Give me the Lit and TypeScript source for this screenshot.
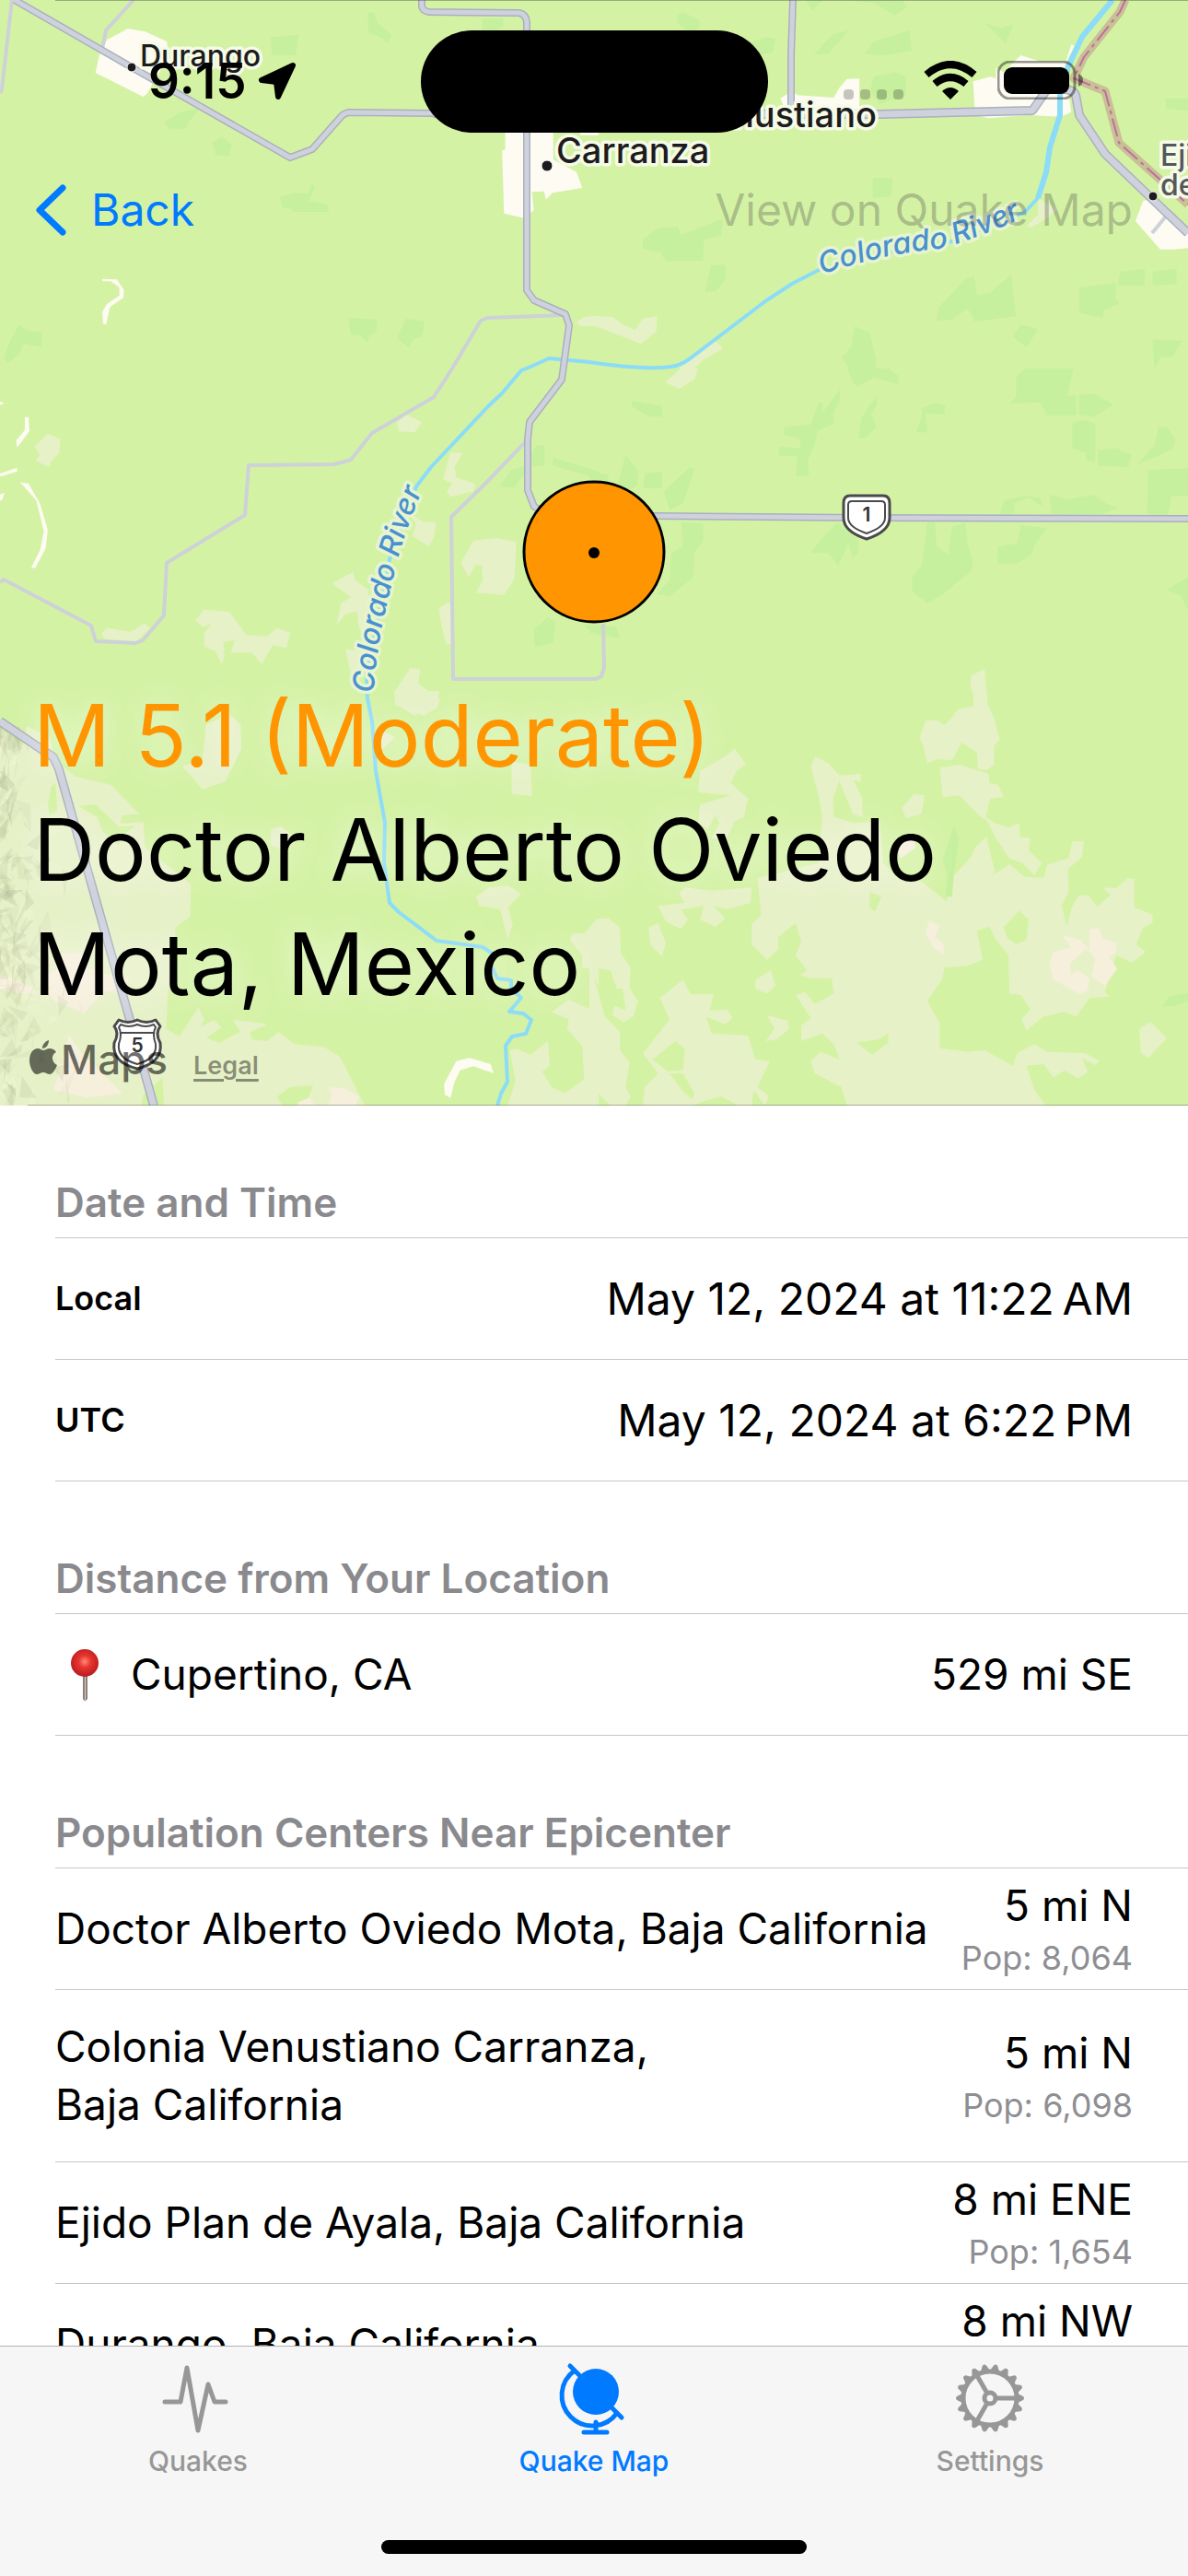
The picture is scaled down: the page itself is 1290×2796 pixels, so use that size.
import { LitElement, html, css, svg } from "lit";
import { customElement, property } from "lit/decorators.js";

interface Place {
  town: string;
  region: string;
  distance: string;
  population: string;
}

const DATES = [
  { label: "Local", value: "May 12, 2024 at 11:22\u202FAM" },
  { label: "UTC", value: "May 12, 2024 at 6:22\u202FPM" },
];

const PLACES: Place[] = [
  { town: "Doctor Alberto Oviedo Mota", region: "Baja California", distance: "5 mi N", population: "8,064" },
  { town: "Colonia Venustiano Carranza", region: "Baja California", distance: "5 mi N", population: "6,098" },
  { town: "Ejido Plan de Ayala", region: "Baja California", distance: "8 mi ENE", population: "1,654" },
  { town: "Durango", region: "Baja California", distance: "8 mi NW", population: "1,192" },
];

/* Each tile of map polygons is stored in its own survey units. */
const tile = (x: number, y: number) => `translate(${x} ${y}) scale(0.4146 0.3333)`;

/* Faceted hill shading along the western slope. */
const relief = (() => {
  let seed = 11;
  const next = () => {
    seed = (seed * 1103515245 + 12345) % 2147483648;
    return seed / 2147483648;
  };
  const tones = ["#8f9a78", "#b9c296", "#ffffe0", "#a5ad88"];
  return Array.from({ length: 230 }, (_, i) => {
    const y = 790 + next() * 410;
    const reach = y < 880 ? 24 : 46 + (y > 1060 ? 34 : 0);
    const x = next() * next() * reach * 1.5;
    const p = [0, 1, 2].map(
      () => `${Math.round(x + (next() - 0.5) * 26)},${Math.round(y + (next() - 0.5) * 40)}`
    );
    return { points: p.join(" "), fill: tones[i % 4], opacity: 0.08 + next() * 0.14 };
  });
})();

@customElement("quake-map")
export class QuakeMap extends LitElement {
  static styles = css`
    :host { display: block; }
    .canvas { display: block; width: 100%; height: 100%; font-family: Inter, "Liberation Sans", sans-serif; }
    .ground { fill: #d4f2a4; }
    .crop { fill: #c6f09e; }
    .scrub { fill: #e7f1c8; }
    .sand { fill: #f6efdc; }
    .town { fill: #fdfbf2; }
    .line { fill: none; stroke-linejoin: round; }
    .casing { stroke: #a9b0bf; stroke-width: 8; }
    .road { stroke: #cfd2dd; stroke-width: 5; }
    .casing-wide { stroke: #a9b0bf; stroke-width: 10; }
    .road-wide { stroke: #cfd2dd; stroke-width: 7; }
    .lane { stroke: #cdd1d8; stroke-width: 4; }
    .river { stroke: #8bdcf8; stroke-width: 4; }
    .river-wide { stroke: #8bdcf8; stroke-width: 6; }
    .band { stroke: #b97c84; stroke-opacity: 0.42; stroke-width: 9; }
    .border { stroke: #bf6ea0; stroke-width: 2; stroke-dasharray: 20 5 4 5; }
    .label { fill: #1c1c1e; stroke: #f6fbe8; stroke-width: 7; stroke-linejoin: round; paint-order: stroke; font-weight: 500; }
    .small { font-size: 32px; }
    .large { font-size: 38px; }
    .muted { fill: #55575a; }
    .water { font-size: 32px; font-style: italic; fill: #4a90d0; stroke: #e6f5cf; }
    .dot { fill: #1c1c1e; stroke: #fff; stroke-width: 1; }
    .sign { fill: #fff; stroke: #4a4a4a; stroke-width: 3; stroke-linejoin: round; }
    .sign-inner { fill: none; stroke: #4a4a4a; stroke-width: 2; stroke-linejoin: round; }
    .sign-text { fill: #333; font-size: 21px; font-weight: 600; text-anchor: middle; }
    .epicenter { fill: #ff9500; stroke: #000; stroke-width: 3; }
    .edge { stroke: #000; stroke-opacity: 0.28; stroke-width: 1; }
  `;

  render() {
    const mainRoads = [
      "M458 0V7Q459 12 466 13L564 14Q572 16 572 25V315L580 326L614 341L618 353L610 412L575 458L573 477V532L580 550L600 560L712 560L941 562L1290 563",
      "M861 0L859 60V120",
      "M16 0L143 73L315 171L339 162L370 127Q373 123 379 122L470 123",
    ];
    const wideRoads = [
      "M470 123L955 124L1121 120L1137 97H1158Q1167 99 1168 103L1172 125L1200 167L1290 253",
      "M0 783L58 822L64 835L141 1107L167 1200",
    ];
    const lanes = [
      "M13 0L2 97L0 101", "M145 0L115 33L111 53",
      "M614 342L529 345L522 348L491 400L471 431L404 470L381 499L363 504L270 505L266 559L181 611L178 668L155 695L147 698L104 696L99 679L4 629L0 632",
      "M573 477L524 528L490 561L492 737H647L653 734L656 725L655 677",
      "M1251 253L1270 230",
    ];
    return html`
      <svg class="canvas" viewBox="0 0 1290 1200" preserveAspectRatio="xMidYMax slice" role="img" aria-label="Map of the epicenter">
        <rect class="ground" width="1290" height="1200" />
        <g transform=${tile(0, 0)}>
          <path class="crop" d="M709 121L782 113L775 180L712 178ZM963 40L980 42L990 75L1027 115L1015 140L992 118L965 108ZM1263 60H1318V85L1300 98H1262ZM430 400L470 365L528 350L495 395L485 420L445 422ZM556 465L580 445L607 470L600 508L565 505ZM732 640L775 628L805 630L818 600L825 610L808 655L858 665L861 690H765V680L740 678ZM913 1035L987 1040V1080L968 1092L962 1115L945 1092L918 1088ZM1062 1038L1112 1045L1105 1098L1082 1105L1070 1133L1040 1100ZM50 1057L68 1075L110 1082V1130L62 1120L52 1150L20 1185L10 1165L30 1100Z" />
          <path class="town" d="M335 93L380 103L437 135L440 165L420 230L385 305L375 315L250 237L260 180L280 130ZM1323 425V487L1315 490L1320 695L1372 710L1398 685L1393 625L1425 623L1430 650L1447 628L1525 612L1510 560L1480 540L1449 520V425ZM1520 425H1568V440H1520ZM268 908L306 910L325 945L323 970L288 1000L278 1057L270 1055L268 1015L280 990L313 962L312 935L290 916H268Z" />
          <path class="scrub" d="M1508 1050L1530 1032L1568 1030V1062L1520 1062Z" />
        </g>
        <g transform=${tile(640, 0)}>
          <path class="crop" d="M230 50L245 40L288 65V92L262 105L232 78ZM400 150L460 120L487 125L480 170L410 190ZM565 0H610L585 35ZM670 0H820L832 25L800 50L745 10ZM640 110L680 100L625 175L588 178L612 145ZM720 175L745 135L838 98L845 165L770 180ZM1038 77L1080 90L1110 78L1090 143ZM745 250L800 235L830 250V310L760 340L735 295ZM1508 320H1568V360L1510 355ZM742 580H795L790 640L742 645ZM140 780L180 742L232 738L240 765L290 740L350 712L345 768L300 780L298 850H200L185 822L140 810ZM318 865L355 862L357 908L330 950L302 952ZM988 905L1008 900L1015 960L1050 955L1075 925L1105 895L1117 1030L1010 1048L990 1005L950 1040L908 1045L915 1000ZM1282 935L1380 920L1378 970L1388 990L1348 1010L1345 1035L1283 1020ZM1390 885L1455 875V930H1384ZM1475 885L1538 875V925L1475 930ZM1130 1057L1175 1072L1145 1132L1108 1095ZM695 1062L735 1085L750 1165V1200H680L660 1165L685 1130ZM1475 1105L1552 1110L1530 1160L1495 1165L1480 1200Z" />
          <path class="town" d="M500 320L530 298L545 310L640 318L655 285L675 257L707 256V355L520 375ZM1005 265L1050 250L1065 255V220L1085 235L1130 180L1180 200H1248L1262 145L1270 150L1245 215L1262 365L1235 380L1150 375L1045 385L1010 375ZM1430 720L1450 655L1475 645L1568 760V808L1530 812L1495 812Z" />
          <path class="scrub" d="M0 1030L60 1032L90 1058L120 1075L140 1038L178 1030L175 1080L135 1120L75 1090L0 1055ZM1175 645L1225 680L1200 710L1155 742L1145 735L1175 700ZM325 1105L350 1135L300 1170L275 1200H235L290 1150Z" />
        </g>
        <g transform=${tile(0, 400)}>
          <path class="crop" d="M1405 250L1427 250V315L1390 320L1345 388L1308 385L1338 330L1370 320ZM1450 290L1568 335V360L1445 315ZM1435 810L1455 825L1448 895L1400 905L1398 850ZM1525 835L1568 840V870Z" />
          <path class="scrub" d="M1040 175L1065 150L1105 175L1085 208L1045 205ZM125 212L158 230L155 275L135 300L128 320L93 300L105 280L90 255ZM1180 272L1212 275L1190 320L1195 355L1245 375L1240 400L1180 418L1170 400L1185 375L1160 360ZM1065 465L1110 500L1142 500L1138 540L1125 580L1080 545L1090 505ZM1240 560L1300 552L1352 565L1347 685L1320 737L1247 730L1265 690L1262 640L1245 640L1228 680L1207 632ZM870 700L925 662L930 690L965 720L962 900L940 840L935 790L905 800L882 835L893 765L920 745ZM1150 780L1175 760L1183 780V900L1168 895L1155 830ZM265 865L280 845L340 857L380 830L393 845L355 890L275 880ZM512 820L535 785L600 792L645 868L700 872L725 845L760 860L750 910L715 900L685 962L660 925H605L615 885L585 890L588 940L580 962L565 920L535 905V860L555 830L530 842ZM905 915L965 920L945 1010L920 1000ZM1035 1050L1075 975L1100 980L1095 1025L1152 1078L1145 1105L1110 1130L1035 1095Z" />
          <path class="town" d="M65 158H75L77 205L45 257L42 235L65 200ZM0 342L45 323V335L5 350H0ZM0 410L12 405L5 430H0ZM52 370L75 375L105 440L125 525L120 585L92 650L82 648L105 590L115 530L95 430L60 380ZM0 107L10 112L5 118H0Z" />
        </g>
        <g transform=${tile(640, 400)}>
          <path class="crop" d="M675 0H785L810 25L808 50L745 30L700 60L690 45ZM1140 0H1268L1252 90L1275 85V152H1198L1182 110L1100 115L1118 90V25ZM1282 85L1325 83L1373 118L1320 158L1282 150ZM110 105L190 122V158L155 155L112 125ZM600 112H612L610 145L640 95L658 65L655 110L640 140V180L597 205L592 240L572 300L575 350H540L545 285H495L498 253L550 260L555 230L510 215V190L580 183ZM750 92L755 115L738 150L752 190L722 228L705 225L712 160ZM905 112L932 118L930 150L880 145L885 208L855 208L872 150L870 130ZM1265 175L1300 167L1325 180V305L1300 300V275L1265 260ZM1332 265L1380 260L1420 280L1412 320L1332 318ZM1490 190L1512 190L1535 230L1530 262L1433 315L1480 250ZM95 280L130 335L125 380L95 405L75 370ZM145 340L190 335V390H140ZM262 322L275 330L245 440L210 462L195 400ZM1205 410L1250 425L1320 412L1355 440L1385 455L1340 475H1210ZM1463 330L1568 325V415H1525L1515 478L1460 475ZM1075 475L1085 430L1140 415L1180 420L1187 450L1150 420L1112 440L1115 470ZM240 500L298 505V560L275 600L272 680L210 742L175 735L210 690L215 600L245 580ZM650 500L705 560V600L690 618L678 570L652 642L625 600L582 600L600 565ZM885 500H905L910 580L940 605L950 515L985 500L990 570L1005 630L1000 660L925 735L885 765L845 725V680L870 640ZM1130 510L1198 520L1165 580L1158 605L1120 635L1068 635L1070 580L1120 570ZM1568 680V790L1550 740L1510 720ZM0 335L50 345V380L0 360ZM0 835L70 840L80 878L0 860Z" />
          <path class="scrub" d="M285 0L275 35L235 65L198 45L240 0ZM1000 1000L1035 978L1042 1090L1060 1140L1072 1200H865L882 1145L935 1162L965 1110L1005 1100L1008 1060L998 1040Z" />
        </g>
        <g transform=${tile(0, 750)}>
          <path class="scrub" d="M0 120L60 180L70 115L130 150L145 230L200 280L290 305L365 400L320 405L315 432L375 425L380 510L500 630L498 735L460 770L455 880L440 985L435 1100L470 1125L520 1030L535 1070L525 1095L560 1070L580 1095L540 1130L575 1145L630 1110L610 1070L700 1085L655 1110L660 1135L700 1140L730 1110L770 1150L850 1160L890 1190L955 1350H0ZM540 110L600 75L630 110L632 190L590 295L530 320L478 245L530 225ZM1032 0H1150L1145 45L1085 80L1035 40ZM1340 230L1390 240L1393 342L1340 335ZM1000 130L1035 150L990 205ZM710 450L735 440L765 470L740 520L708 500ZM1247 670L1280 640L1330 632L1365 660L1330 705L1343 760L1330 810L1310 710L1255 700ZM1568 745V960L1545 905L1525 900V860L1492 810L1500 790L1530 788ZM1445 1045L1490 1005L1568 1050V1350H1330L1350 1270L1335 1170L1355 1165L1390 1185L1435 1140L1440 1220L1420 1240L1445 1290L1480 1310L1530 1265L1525 1155L1485 1100L1490 1070Z" />
          <path class="ground" d="M145 300L150 390L130 405L125 370L135 310ZM205 375L250 370L310 440L355 440L330 460L310 500L270 460L255 410ZM370 1350H430L425 1260L375 1315ZM725 1320L760 1290L820 1285L800 1350H740Z" />
          <path class="sand" d="M160 855L240 850L225 900L290 925L340 935L320 975L270 980L220 1050L165 1020L130 1000L125 925L165 890ZM0 920L80 960L100 990L0 975ZM180 1120L215 1180L320 1310L230 1325L140 1300L165 1200ZM860 1290L905 1295L940 1320L930 1350H860L870 1310ZM780 1340L810 1325L825 1350H780Z" />
          <path class="town" d="M1163 1280L1195 1205L1230 1195L1285 1215L1293 1245L1240 1222L1205 1235L1190 1275L1180 1325L1165 1315Z" />
        </g>
        <g transform=${tile(640, 750)}>
          <path class="scrub" d="M865 155L882 95H910L930 112L970 62L1008 55L1005 0H1042L1038 50L1062 95L1060 125L1075 155L1060 180V240L1040 258L1018 255L1015 200L975 167L950 225L910 222L885 235L875 180ZM918 250L970 240L1045 270L1048 300L1070 305L1085 345L1050 350L1038 410L1060 430L1100 445L1125 430L1128 475L1155 480L1150 520L1185 560L1165 600L1135 560L1100 545L1065 480L1040 420L1020 405L985 360L970 340L925 345ZM580 245L592 213L625 235L655 275L710 270L712 295L692 290L715 350V410L690 400L665 325L655 290L638 350L640 410L690 430L760 425L770 560L800 600L870 620L935 685L955 600L1000 540L1010 510L1040 475L1062 590L1045 608L1100 565L1140 605L1190 608L1200 565L1255 545L1265 490L1295 490L1290 540L1253 580L1255 650L1237 700L1250 765L1265 700L1282 665H1305L1330 702L1365 665L1345 640L1380 642L1410 610L1427 612V705L1475 728V755L1450 770L1432 825L1457 850L1420 885L1380 860L1350 980L1362 995L1330 998L1310 1000L1275 1060L1245 1045L1190 1060L1145 1105L1132 1070L1155 1035L1130 990L1100 985L1098 860L1065 810L1048 768L1015 780L1030 875L990 895L930 900L925 935L885 1010L917 1080V1163L990 1175L1035 1170L1110 1220L1120 1180L1165 1150L1200 1175L1300 1180L1335 1205L1325 1218L1290 1195L1305 1240L1280 1262L1245 1235L1215 1258L1190 1215L1145 1220L1165 1300L1195 1350H675L660 1290L590 1245L580 1205L605 1175L655 1200L640 1150L610 1115L555 1140V1090L580 1065L540 990L565 980L590 1020L640 985L635 935L580 935L552 925L570 910L540 860L555 815L540 755L495 800V840L465 875L425 825V760L450 730L440 610L600 560L610 410L602 350ZM410 240L380 187L360 210L290 260L285 330L370 340L290 370L285 430L310 450L330 405L340 430L320 480L360 480L380 425L405 410L415 350L370 300L385 260ZM850 335L878 340L870 400L830 415L818 380ZM235 660L250 640L320 650L425 640L422 690L360 710L325 700L355 740L330 768L290 745L300 700L240 712L258 745L240 775L200 750L180 700L250 690ZM155 770L180 757L200 820L190 865L160 825ZM0 770L20 742L50 740L80 770L82 855L108 900L105 965L127 1010L115 1060L90 1078L60 1055L65 1025L95 1040L88 970L72 970L55 910L5 900L40 1060L80 1110V1170L105 1210L95 1290L108 1320L95 1350H55L0 1280ZM245 940L265 988H325L315 1040L360 1038L375 1065L355 1085L305 1060L320 1115L415 1122L435 1200L472 1205L440 1290L470 1320L460 1350L430 1300L425 1350H390L345 1320L300 1335L270 1350H140L145 1290L180 1245L140 1180L210 1070L185 1000ZM435 940L475 910L487 960L465 985L435 970ZM465 1055L520 1075L522 1100L490 1135L462 1140L485 1100ZM1440 1100L1470 1078L1512 1130L1475 1180L1465 1195L1445 1180Z" />
          <path class="ground" d="M1085 770L1125 715L1150 745L1145 810L1118 825L1095 805ZM165 1200L225 1140L250 1165L245 1235L205 1238ZM700 1145L755 1135L783 1115V1145L740 1185L720 1165ZM735 655L765 670L748 718L733 705ZM210 1245L245 1245L275 1310L270 1330L245 1305Z" />
          <path class="sand" d="M880 790L890 748L918 765L905 800L928 825V860L905 840ZM1205 890L1215 850L1260 835L1240 795L1285 810L1310 845V775H1335L1345 808L1380 820V850L1362 865L1382 905L1350 960L1315 930L1325 870L1300 840L1260 885V925L1280 910L1310 935L1305 975L1285 988L1245 960L1215 940ZM805 500L850 480L855 510L815 545Z" />
          <path class="crop" d="M955 440L968 480L955 590L950 670H932L938 600L925 550ZM1500 1028L1520 992L1568 985V1010L1530 1025Z" />
        </g>
        ${relief.map((r) => svg`<polygon points=${r.points} fill=${r.fill} opacity=${r.opacity.toFixed(2)} />`)}

        ${lanes.map((d) => svg`<path class="line lane" d=${d} />`)}
        <path class="line river" d="M1127 215L1113 230L1034 262L955 275L889 293L860 308L831 327L785 362L748 390Q738 397 729 398Q700 402 640 393L596 389L574 399L566 402L545 427L531 440L468 507L452 528L423 607L398 733L399 758L404 783L408 837L418 893L417 937L423 980L433 990L474 1021L524 1028L535 1035L532 1045L540 1062L555 1064L555 1073L566 1083L553 1098L568 1100L577 1107L571 1122L556 1125L549 1135L551 1174L544 1187L540 1200" />
        <path class="line river-wide" d="M1208 0L1175 40L1160 72L1151 103V125L1140 160L1136 187L1127 215" />
        ${mainRoads.map((d) => svg`<path class="line casing" d=${d} />`)}
        ${wideRoads.map((d) => svg`<path class="line casing-wide" d=${d} />`)}
        ${mainRoads.map((d) => svg`<path class="line road" d=${d} />`)}
        ${wideRoads.map((d) => svg`<path class="line road-wide" d=${d} />`)}
        <path class="line band" d="M1222 0L1216 13L1177 62L1166 85L1200 99L1215 155L1290 222" />
        <path class="line border" d="M1222 0L1216 13L1177 62L1166 85L1200 99L1215 155L1290 222" />

        <circle class="dot" cx="143" cy="73" r="5" />
        <circle class="dot" cx="594" cy="180" r="6" />
        <circle class="dot" cx="1252" cy="213" r="5" />
        <text class="label small" x="152" y="72">Durango</text>
        <text class="label large" x="952" y="138" text-anchor="end">Colonia Venustiano</text>
        <text class="label large" x="604" y="177">Carranza</text>
        <text class="label small muted" x="1260" y="180">Ejido</text>
        <text class="label small muted" x="1260" y="212">de</text>
        <path id="river-north" fill="none" d="M892 298Q960 275 1020 270Q1075 256 1160 212" />
        <path id="river-south" fill="none" d="M406 752Q408 700 426 632Q436 580 474 496" />
        <text class="label water"><textPath href="#river-north">Colorado River</textPath></text>
        <text class="label water"><textPath href="#river-south">Colorado River</textPath></text>

        <path class="sign" d="M923 538H959Q966 538 966 546V562Q966 577 941 585Q916 577 916 562V546Q916 538 923 538Z" />
        <path class="sign-inner" d="M925 544H957Q961 544 961 548V562Q961 572 941 579Q921 572 921 562V548Q921 544 925 544Z" />
        <text class="sign-text" x="941" y="566">1</text>
        <path class="sign" d="M129 1107Q139 1112 149 1107Q159 1112 169 1107L174 1114Q168 1121 174 1132Q177 1153 149 1160Q121 1153 124 1132Q130 1121 124 1114Z" />
        <path class="sign-inner" d="M131 1112Q140 1116 149 1112Q158 1116 167 1112L169 1115Q165 1122 169 1133Q171 1149 149 1155Q127 1149 129 1133Q133 1122 129 1115ZM130 1121H168" />
        <text class="sign-text" x="149" y="1142">5</text>

        <circle class="epicenter" cx="645" cy="599" r="76" />
        <circle cx="645" cy="600" r="6" />
        <path class="edge" d="M60 0.5H1290M30 1199.5H1290" />
      </svg>
    `;
  }
}

@customElement("status-bar")
export class StatusBar extends LitElement {
  static styles = css`
    :host { display: block; }
    .bar { display: grid; grid-template-columns: 1fr 377px 1fr; padding-top: 33px; }
    .island { height: 111px; border-radius: 56px; background: #000; }
    .side { display: flex; align-items: center; justify-content: center; gap: 12px; }
    .clock { padding: 0 0 2px 26px; }
    .time { font-size: 53px; font-weight: 600; line-height: 60px; }
    .status { align-items: flex-end; align-self: center; gap: 22px; padding: 0 32px 4px 0; }
    .icon { display: block; flex: none; }
  `;

  render() {
    return html`
      <div class="bar">
        <div class="side clock">
          <span class="time">9:15</span>
          <svg class="icon" width="42" height="42" viewBox="0 0 42 42" aria-hidden="true">
            <path d="M38 4L4 20L20 22L22 38Z" stroke="#000" stroke-width="6" stroke-linejoin="round" />
          </svg>
        </div>
        <div class="island"></div>
        <div class="side status">
          <svg class="icon" width="65" height="42" viewBox="0 0 65 42" aria-hidden="true">
            ${[0, 18, 36, 54].map((x) => svg`<rect x=${x} y="31" width="11" height="11" rx="4" opacity="0.22" />`)}
          </svg>
          <svg class="icon" width="58" height="42" viewBox="0 0 58 42" aria-hidden="true">
            <path d="M3 15Q29 -7 55 15" fill="none" stroke="#000" stroke-width="8" />
            <path d="M12 25Q29 11 46 25" fill="none" stroke="#000" stroke-width="8" />
            <path d="M20 33Q29 25 38 33L29 42Z" />
          </svg>
          <svg class="icon" width="93" height="42" viewBox="0 0 93 42" aria-hidden="true">
            <rect x="1" y="1" width="83" height="40" rx="13" fill="none" stroke="#000" stroke-opacity="0.4" stroke-width="3" />
            <rect x="7" y="7" width="71" height="29" rx="9" />
            <path d="M88 14Q93 16 93 21T88 28Z" opacity="0.45" />
          </svg>
        </div>
      </div>
    `;
  }
}

@customElement("tab-bar")
export class TabBar extends LitElement {
  @property() active = "Quake Map";

  static styles = css`
    :host { display: block; }
    .bar { background: #f6f6f6; border-top: 1px solid #b2b2b2; }
    .tabs { display: grid; grid-template-columns: repeat(3, 1fr); padding-top: 14px; }
    .tab { display: flex; flex-direction: column; align-items: center; gap: 6px; color: #979797; font-size: 30px; font-weight: 500; line-height: 40px; text-decoration: none; }
    .active { color: #007aff; }
    .icon { display: block; }
    .foot { display: flex; justify-content: center; padding: 66px 0 24px; }
    .home { width: 462px; height: 15px; border-radius: 8px; background: #000; }
  `;

  private icons: Record<string, unknown> = {
    Quakes: svg`<path d="M4 46H21L28 9L40 77L51 27L58 46H70" fill="none" stroke="currentColor" stroke-width="5" stroke-linecap="round" stroke-linejoin="round" />`,
    "Quake Map": svg`
      <circle cx="42" cy="35" r="25" fill="currentColor" />
      <g fill="none" stroke="currentColor" stroke-width="5" stroke-linecap="round">
        <path d="M19 12A33 33 0 1 0 65 58M42 68V79M29 79H54M14 7L24 17M60 53L70 63" />
      </g>`,
    Settings: svg`
      <g fill="none" stroke="currentColor">
        <circle cx="40" cy="42" r="29" stroke-width="5" />
        <circle cx="40" cy="42" r="6" stroke-width="5" />
        ${[0, 120, 240].map((a) => svg`<path d="M48 42H67" stroke-width="5" transform="rotate(${a} 40 42)" />`)}
      </g>
      ${Array.from({ length: 18 }, (_, i) => svg`<path d="M70 37L76 40Q78 42 76 44L70 47Z" fill="currentColor" transform="rotate(${i * 20} 40 42)" />`)}`,
  };

  render() {
    return html`
      <nav class="bar" aria-label="Main">
        <div class="tabs">
          ${Object.entries(this.icons).map(
            ([name, icon]) => html`
              <a class="tab ${name === this.active ? "active" : ""}" href="#${name.toLowerCase().replace(" ", "-")}">
                <svg class="icon" width="80" height="84" viewBox="0 0 80 84" aria-hidden="true">${icon}</svg>
                <span>${name}</span>
              </a>`
          )}
        </div>
        <div class="foot"><div class="home"></div></div>
      </nav>
    `;
  }
}

@customElement("app-root")
export class AppRoot extends LitElement {
  static styles = css`
    :host { display: block; font-family: Inter, "Liberation Sans", sans-serif; color: #000; background: #fff; }
    .screen { display: flex; flex-direction: column; height: 100vh; }
    .scroll { flex: 1; min-height: 0; overflow-y: auto; scrollbar-width: none; }
    .hero { position: relative; display: flex; flex-direction: column; aspect-ratio: 43 / 40; }
    .map { position: absolute; inset: 0; overflow: hidden; }
    .over { position: relative; }
    .actions { display: flex; align-items: center; justify-content: space-between; padding: 51px 60px 50px 38px; }
    .action { display: flex; align-items: center; gap: 27px; margin: 0; padding: 0; border: 0; background: none; font: inherit; font-size: 48px; line-height: 66px; color: #007aff; }
    .action:disabled { color: rgba(60, 60, 67, 0.3); }
    .title { margin: auto 0 0; padding: 0 36px; font-size: 93px; font-weight: 400; line-height: 124px; text-shadow: 0 0 30px rgba(255, 255, 255, 0.6); }
    .magnitude { display: block; color: #ff9500; }
    .credit { display: flex; align-items: baseline; padding: 14px 32px 15px; line-height: 56px; color: rgba(0, 0, 0, 0.56); }
    .brand { display: flex; align-items: baseline; gap: 4px; font-size: 44px; font-weight: 500; }
    .legal { margin-left: 28px; font-size: 27px; font-weight: 600; color: rgba(0, 0, 0, 0.42); text-underline-offset: 5px; text-decoration-thickness: 3px; }
    .head { box-sizing: border-box; display: flex; align-items: flex-end; height: 144px; margin: 0 0 0 60px; padding-bottom: 11px; border-bottom: 1px solid #c6c6c8; color: #8a8a8e; font-size: 44px; font-weight: 600; line-height: 54px; }
    .rows { margin: 0; padding: 0; list-style: none; }
    .row { box-sizing: border-box; display: flex; align-items: center; justify-content: space-between; gap: 32px; min-height: 132px; margin-left: 60px; padding-right: 60px; border-bottom: 1px solid #c6c6c8; font-size: 46px; line-height: 63px; }
    .term { font-size: 36px; font-weight: 600; }
    .when { margin: 0; font-size: 48px; }
    .here { display: flex; align-items: center; gap: 18px; }
    .name { padding: 30px 0; }
    .part { white-space: nowrap; }
    .figures { display: flex; flex: none; flex-direction: column; gap: 3px; align-items: flex-end; line-height: 60px; }
    .pop { color: #8e8e93; font-size: 36px; line-height: 48px; }
  `;

  render() {
    return html`
      <div class="screen">
        <main class="scroll">
          <header class="hero">
            <quake-map class="map"></quake-map>
            <status-bar class="over"></status-bar>
            <div class="over actions">
              <button class="action" type="button">
                <svg width="34" height="56" viewBox="0 0 34 56" aria-hidden="true">
                  <path d="M30 4L5 28L30 52" fill="none" stroke="currentColor" stroke-width="7" stroke-linecap="round" stroke-linejoin="round" />
                </svg>
                Back
              </button>
              <button class="action" type="button" disabled>View on Quake Map</button>
            </div>
            <h1 class="over title"><span class="magnitude">M 5.1 (Moderate)</span> Doctor Alberto Oviedo <span class="part">Mota, Mexico</span></h1>
            <div class="over credit">
              <span class="brand">
                <svg width="30" height="37" viewBox="0 0 30 37" fill="currentColor" aria-hidden="true">
                  <path d="M21 0C21 5 18 9 14 9C14 5 17 1 21 0ZM15 11C17 11 19 9 22 9C25 9 27 10 29 13C23 16 24 24 30 27C28 32 25 37 22 37C19 37 18 35 15 35C12 35 11 37 8 37C4 37 0 29 0 22C0 14 4 9 9 9C12 9 13 11 15 11Z" />
                </svg>
                Maps
              </span>
              <a class="legal" href="#legal">Legal</a>
            </div>
          </header>

          <section>
            <h2 class="head">Date and Time</h2>
            <dl class="rows">
              ${DATES.map((d) => html`<div class="row"><dt class="term">${d.label}</dt><dd class="when">${d.value}</dd></div>`)}
            </dl>
          </section>

          <section>
            <h2 class="head">Distance from Your Location</h2>
            <div class="row">
              <span class="here">
                <svg width="64" height="60" viewBox="0 0 64 60" aria-hidden="true">
                  <defs>
                    <radialGradient id="pin" cx="0.5" cy="0.45" r="0.55">
                      <stop offset="0" stop-color="#ff8a78" />
                      <stop offset="0.4" stop-color="#e8352f" />
                      <stop offset="1" stop-color="#b81c20" />
                    </radialGradient>
                  </defs>
                  <path d="M30 30H35V56Q32 60 30 56Z" fill="#8d7d77" />
                  <path d="M32 30H33V57H32Z" fill="#d8cfca" />
                  <circle cx="32" cy="17" r="15" fill="url(#pin)" />
                </svg>
                Cupertino, CA
              </span>
              <span>529 mi SE</span>
            </div>
          </section>

          <section>
            <h2 class="head">Population Centers Near Epicenter</h2>
            <ul class="rows">
              ${PLACES.map(
                (p) => html`
                  <li class="row">
                    <span class="name"><span class="part">${p.town},</span> <span class="part">${p.region}</span></span>
                    <span class="figures"><span>${p.distance}</span><span class="pop">Pop: ${p.population}</span></span>
                  </li>`
              )}
            </ul>
          </section>
        </main>
        <tab-bar></tab-bar>
      </div>
    `;
  }
}
